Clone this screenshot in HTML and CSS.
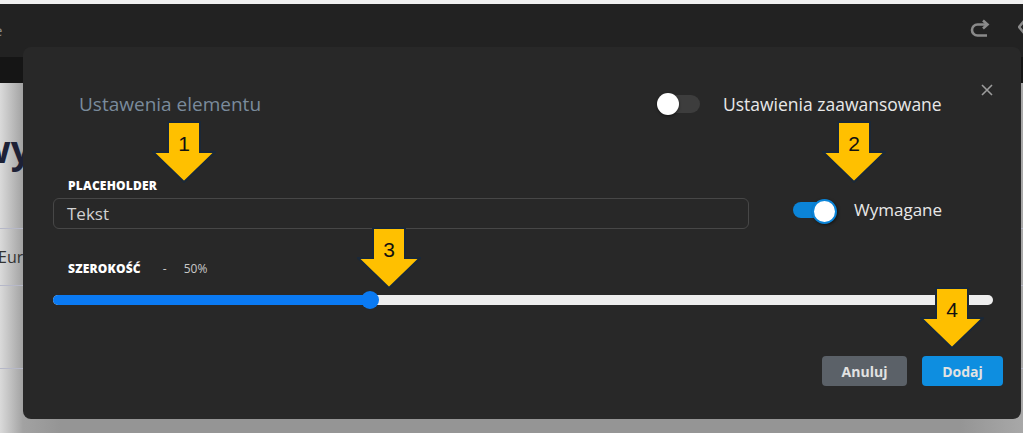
FILE: index.html
```html
<!DOCTYPE html>
<html lang="pl">
<head>
<meta charset="utf-8">
<title>Ustawenia elementu</title>
<link rel="stylesheet" href="styles.css">
</head>
<body>
<div class="app">
  <div class="topline"></div>
  <header class="topbar">
    <span class="crumb">e</span>
    <div class="tools">
      <svg class="tool-icon" width="24" height="20" viewBox="0 0 24 20"><path d="M19 5.5H9.5a5.5 5.5 0 0 0 0 11H19" fill="none" stroke="#8a8a8a" stroke-width="2.6"/><path d="M15 1.5L19.5 5.5L15 9.5" fill="none" stroke="#8a8a8a" stroke-width="2.6"/></svg>
      <svg class="tool-icon2" width="8" height="20" viewBox="0 0 8 20"><path d="M6 2L1 8L6 14" fill="none" stroke="#8a8a8a" stroke-width="2.6"/></svg>
    </div>
  </header>
  <div class="subbar"></div>
  <main class="page">
    <h1 class="page-title">wy</h1>
    <div class="page-line"></div>
    <div class="page-cell">Eur</div>
    <div class="page-line"></div>
    <div class="page-gap"></div>
    <div class="page-line"></div>
    <div class="page-cards">
      <div class="page-card small"></div>
      <div class="page-card wide"></div>
    </div>
  </main>
</div>

<div class="modal">
  <button class="close" aria-label="Zamknij"><svg width="12" height="12" viewBox="0 0 12 12"><path d="M1 1L11 11M11 1L1 11" stroke="#9c9c9c" stroke-width="1.6"/></svg></button>
  <div class="modal-head">
    <div class="modal-title">Ustawenia elementu</div>
    <div class="adv">
      <span class="switch off"><span class="track"></span><span class="knob"></span></span>
      <span class="adv-label">Ustawienia zaawansowane</span>
    </div>
  </div>
  <div class="field-row">
    <div class="field">
      <div class="label">PLACEHOLDER</div>
      <div class="input">Tekst</div>
    </div>
    <div class="req">
      <span class="switch on"><span class="track"></span><span class="knob"></span></span>
      <span class="req-label">Wymagane</span>
    </div>
  </div>
  <div class="width-row">
    <span class="label">SZEROKOŚĆ</span>
    <span class="dash">-</span>
    <span class="pct">50%</span>
  </div>
  <div class="slider">
    <div class="fill" style="width:33.7%"></div>
    <div class="thumb" style="left:33.7%"></div>
  </div>
  <div class="actions">
    <button class="btn cancel">Anuluj</button>
    <button class="btn add">Dodaj</button>
  </div>
</div>

<div class="callout c1"><svg viewBox="0 0 64 62" width="64" height="62"><polygon points="16,1 48,1 48,31 63,31 32,61 1,31 16,31"/><text x="32" y="30">1</text></svg></div>
<div class="callout c2"><svg viewBox="0 0 64 62" width="64" height="62"><polygon points="16,1 48,1 48,31 63,31 32,61 1,31 16,31"/><text x="32" y="30">2</text></svg></div>
<div class="callout c3"><svg viewBox="0 0 64 62" width="64" height="62"><polygon points="16,1 48,1 48,31 63,31 32,61 1,31 16,31"/><text x="32" y="30">3</text></svg></div>
<div class="callout c4"><svg viewBox="0 0 64 62" width="64" height="62"><polygon points="16,1 48,1 48,31 63,31 32,61 1,31 16,31"/><text x="32" y="30">4</text></svg></div>
</body>
</html>
```
FILE: styles.css
```css
html, body {
  margin: 0;
  padding: 0;
}
body {
  width: 1023px;
  height: 433px;
  overflow: hidden;
  position: relative;
  font-family: "Open Sans", "Noto Sans", sans-serif;
  background: #959595;
}
.topline {
  height: 4px;
  background: #f0f0f0;
}
.topbar {
  height: 53px;
  background: #222222;
  display: flex;
  align-items: center;
  justify-content: space-between;
}
.crumb {
  color: #8a8a8a;
  font-size: 15px;
  margin-left: -6px;
  margin-top: -2px;
}
.tools {
  display: flex;
  align-items: center;
  gap: 26px;
  margin-top: -4px;
  margin-right: -3px;
}
.subbar {
  height: 26px;
  background: #151515;
}
.page {
  height: 350px;
  padding-top: 44px;
  box-sizing: border-box;
  color: #1d2136;
  background:
    linear-gradient(to right, rgba(149,149,149,0) 960px, #a8a8a8 1023px),
    linear-gradient(to right, #dadada 0, #bdbdbd 12px, #a2a2a2 23px, #959595 60px);
}
.page-title {
  margin: 0 0 0 -21px;
  font-size: 37px;
  font-weight: 700;
  line-height: 44px;
  height: 101px;
}
.page-line {
  height: 1px;
  background: #b6b8c8;
}
.page-cell {
  height: 56px;
  line-height: 56px;
  font-size: 16px;
  color: #333;
  margin-left: -2px;
}
.page-gap {
  height: 82px;
}
.page-cards {
  display: flex;
  gap: 10px;
  margin-top: 40px;
  padding-left: 290px;
}
.page-card {
  height: 16px;
  border: 1px solid #7e7e7e;
  border-top: 0;
  border-radius: 0 0 4px 4px;
  margin-top: -10px;
}
.page-card.small { width: 20px; }
.page-card.wide { width: 460px; }

/* modal */
.modal {
  position: absolute;
  left: 23px;
  top: 47px;
  width: 998px;
  height: 372px;
  box-sizing: border-box;
  background: #282828;
  border-radius: 8px;
  padding: 0 28px 0 30px;
  display: flex;
  flex-direction: column;
}
.close {
  position: absolute;
  top: 37px;
  right: 28px;
  width: 12px;
  height: 12px;
  padding: 0;
  border: 0;
  background: none;
  display: flex;
}
.modal-head {
  display: grid;
  grid-template-columns: 603px auto;
  align-items: center;
  margin-top: 45px;
  height: 24px;
}
.modal-title {
  padding-left: 26px;
  font-size: 19px;
  color: #7a8b9c;
  line-height: 24px;
}
.adv {
  display: flex;
  align-items: center;
  gap: 23px;
}
.adv-label {
  font-size: 17.5px;
  color: #e8e8e8;
  line-height: 24px;
}
.req-label {
  font-size: 17px;
  color: #e8e8e8;
  line-height: 24px;
}
.switch {
  position: relative;
  display: block;
  width: 44px;
  height: 24px;
}
.switch .track {
  position: absolute;
  border-radius: 9px;
}
.switch .knob {
  position: absolute;
  border-radius: 50%;
  background: #ffffff;
  box-sizing: border-box;
}
.switch.off .track {
  left: 4px;
  top: 3px;
  width: 40px;
  height: 18px;
  background: #3d3d3d;
}
.switch.off .knob {
  left: 1px;
  top: 1px;
  width: 22px;
  height: 22px;
  box-shadow: 0 1px 3px rgba(0, 0, 0, 0.5);
}
.switch.on .track {
  left: 0;
  top: 4px;
  width: 40px;
  height: 16px;
  background: #0b84d8;
}
.switch.on .knob {
  left: 19px;
  top: 1px;
  width: 25px;
  height: 25px;
  border: 2px solid #0b84d8;
  box-shadow: 1px 1px 3px rgba(0, 0, 0, 0.5);
}
.field-row {
  display: flex;
  align-items: flex-end;
  margin-top: 62px;
}
.field {
  width: 696px;
  display: flex;
  flex-direction: column;
  gap: 5px;
}
.label {
  padding-left: 15px;
  font-size: 12px;
  font-weight: 800;
  line-height: 15px;
  letter-spacing: 0.2px;
  color: #ffffff;
}
.input {
  height: 31px;
  box-sizing: border-box;
  border: 1px solid #474747;
  border-radius: 6px;
  padding-left: 13px;
  font-size: 17px;
  color: #d2d2d2;
  display: flex;
  align-items: center;
}
.req {
  display: flex;
  align-items: center;
  height: 31px;
  margin-left: 44px;
  margin-bottom: 4px;
  gap: 17px;
}
.width-row {
  display: flex;
  align-items: baseline;
  margin-top: 32px;
  line-height: 15px;
}
.dash {
  margin-left: 22px;
  font-size: 12px;
  color: #c8c8c8;
}
.pct {
  margin-left: 17px;
  font-size: 12px;
  color: #c8c8c8;
}
.slider {
  position: relative;
  margin-top: 19px;
  height: 10px;
  border-radius: 5px;
  background: #eeeeee;
}
.slider .fill {
  height: 100%;
  border-radius: 5px 0 0 5px;
  background: #0a7af3;
}
.slider .thumb {
  position: absolute;
  top: -4px;
  width: 18px;
  height: 18px;
  margin-left: -9px;
  border-radius: 50%;
  background: #0a7af3;
}
.actions {
  display: flex;
  justify-content: flex-end;
  gap: 15px;
  margin-top: 51px;
  margin-right: -10px;
}
.btn {
  height: 30px;
  border: 0;
  border-radius: 4px;
  font-family: "Open Sans", sans-serif;
  font-size: 14px;
  font-weight: 700;
  color: #e2e2e2;
  padding: 0;
}
.btn.cancel {
  width: 85px;
  background: #5b6168;
}
.btn.add {
  width: 81px;
  background: #0e8ee0;
}

/* callout arrows */
.callout {
  position: absolute;
  width: 64px;
  height: 62px;
}
.callout svg {
  display: block;
}
.callout polygon {
  fill: #ffc000;
  stroke: #1a2838;
  stroke-width: 2;
  stroke-linejoin: miter;
}
.callout text {
  font-family: "Liberation Sans", Arial, sans-serif;
  font-size: 21px;
  fill: #111111;
  text-anchor: middle;
}
.c1 { left: 152px; top: 121px; }
.c2 { left: 822px; top: 121px; }
.c3 { left: 357px; top: 227px; }
.c4 { left: 920px; top: 287px; }
```
